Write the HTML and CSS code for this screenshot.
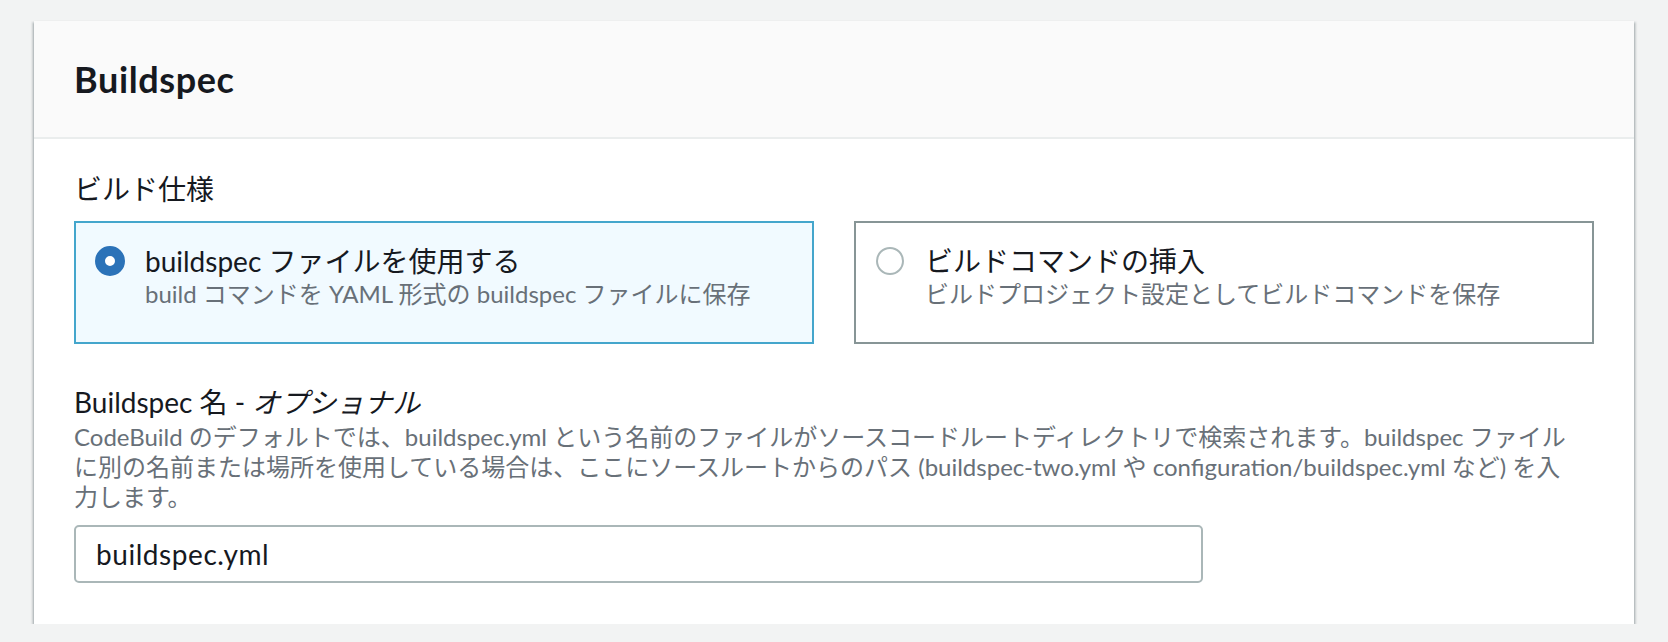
FILE: index.html
```html
<!DOCTYPE html>
<html lang="ja">
<head>
    <meta charset="UTF-8">
    <meta name="viewport" content="width=device-width, initial-scale=1.0">
    <title>Buildspec</title>
    <link rel="stylesheet" href="styles.css">
</head>
<body>

<div class="container">
    <div class="container-header">
        <h2>Buildspec</h2>
    </div>
    <div class="container-body">
        <div class="field-label">ビルド仕様</div>
        <div class="tiles">
            <label class="tile selected">
                <span class="radio-slot"><span class="radio checked"></span></span>
                <span class="tile-text">
                    <span class="tile-label">buildspec ファイルを使用する</span>
                    <span class="tile-desc">build コマンドを YAML 形式の buildspec ファイルに保存</span>
                </span>
            </label>
            <label class="tile">
                <span class="radio-slot"><span class="radio"></span></span>
                <span class="tile-text">
                    <span class="tile-label">ビルドコマンドの挿入</span>
                    <span class="tile-desc">ビルドプロジェクト設定としてビルドコマンドを保存</span>
                </span>
            </label>
        </div>

        <div class="form-field">
            <label class="field-label" for="buildspec_name">Buildspec 名 - <i>オプショナル</i></label>
            <p class="field-desc">CodeBuild のデフォルトでは、buildspec.yml という名前のファイルがソースコードルートディレクトリで検索されます。buildspec ファイル<br>に別の名前または場所を使用している場合は、ここにソースルートからのパス (buildspec-two.yml や configuration/buildspec.yml など) を入<br>力します。</p>
            <input type="text" id="buildspec_name" value="buildspec.yml">
        </div>
    </div>
</div>

</body>
</html>
```

FILE: styles.css
```css
body {
    font-family: Lato, "Noto Sans CJK JP", sans-serif;
    background-color: #f2f3f3;
    color: #16191f;
    margin: 0;
    padding: 21px 0 0 34px;
}
.container {
    width: 1600px;
    background-color: white;
    box-shadow: 0 2px 2px 0 rgba(0, 28, 36, 0.35), 2px 1px 2px 0 rgba(0, 28, 36, 0.15), -2px 1px 2px 0 rgba(0, 28, 36, 0.15);
}
.container-header {
    background-color: #fafafa;
    border-bottom: 2px solid #eaeded;
    padding: 36px 40px 36px;
}
h2 {
    margin: 0;
    font-size: 36px;
    line-height: 44px;
    font-weight: bold;
    letter-spacing: 0.6px;
}
.container-body {
    padding: 30px 40px 41px;
}
.field-label {
    display: block;
    font-size: 28px;
    line-height: 40px;
    margin-bottom: 12px;
}
.field-label i {
    font-style: italic;
}
.tiles {
    display: grid;
    grid-template-columns: 1fr 1fr;
    gap: 40px;
}
.tile {
    display: flex;
    border: 2px solid #879596;
    padding: 20px 20px 32px 19px;
    min-height: 123px;
    box-sizing: border-box;
}
.tile.selected {
    border-color: #44a6cc;
    background-color: #f1faff;
}
.radio-slot {
    width: 30px;
    height: 36px;
    display: flex;
    align-items: center;
    justify-content: center;
    margin-right: 20px;
}
.radio {
    width: 28px;
    height: 28px;
    box-sizing: border-box;
    border: 2px solid #aab7b8;
    border-radius: 50%;
    background-color: white;
}
.radio.checked {
    width: 30px;
    height: 30px;
    border: 10px solid #2b72b8;
}
.tile-text {
    display: flex;
    flex-direction: column;
}
.tile-label {
    font-size: 28px;
    line-height: 36px;
}
.tile-desc {
    font-size: 24px;
    line-height: 30px;
    color: #687078;
}
.form-field {
    margin-top: 38px;
}
.form-field .field-label {
    margin-bottom: 0;
}
.field-desc {
    margin: 0 0 13px;
    font-size: 24px;
    line-height: 30px;
    color: #687078;
}
input {
    display: block;
    width: 1129px;
    height: 58px;
    box-sizing: border-box;
    padding: 0 20px;
    border: 2px solid #aab7b8;
    border-radius: 5px;
    font-family: Lato, "Noto Sans CJK JP", sans-serif;
    font-size: 28px;
    color: #16191f;
    letter-spacing: 0.02em;
}
```
